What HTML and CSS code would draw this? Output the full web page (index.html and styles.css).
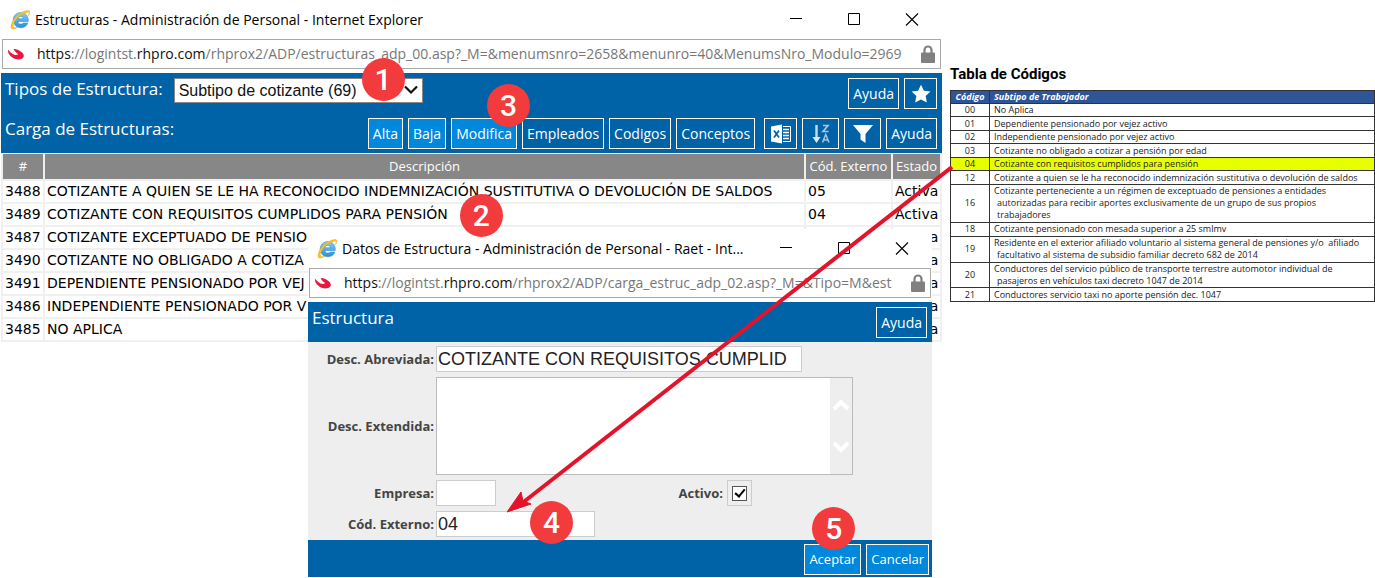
FILE: index.html
```html
<!DOCTYPE html>
<html lang="es">
<head>
<meta charset="utf-8">
<title>Estructuras - Administración de Personal</title>
<link rel="stylesheet" href="styles.css">
</head>
<body>
<svg class="defs" aria-hidden="true">
  <defs>
    <linearGradient id="ie-blue" x1="0" y1="0" x2="0" y2="1"><stop offset="0" stop-color="#7fd0f5"/><stop offset="1" stop-color="#2a8fd6"/></linearGradient>
    <symbol id="ie" viewBox="0 0 20 20">
      <path d="M10.600 2.600c-4.300 0-7.400 3.200-7.400 7.500s3.200 7.700 7.600 7.700c3.400 0 6-1.800 7.100-4.800h-4.600c-.5.700-1.300 1.100-2.400 1.100-1.700 0-2.800-1-2.900-2.600h10.300c.5-5.200-2.900-8.900-7.700-8.900zM8 8.700c.2-1.400 1.200-2.300 2.700-2.300s2.500.9 2.600 2.300z" fill="url(#ie-blue)" stroke="#2b87c8" stroke-width=".5"/>
      <path d="M15.200 3.600C17 2.200 18.600 1.700 19 2.500c.3.700 0 1.900-.6 3.200.9-1.800 1.900-3.900.8-4.900C17-.6 8.500 3 3.900 9.200.8 13.700.2 18 2 18.900c1.400.6 3.800-.3 6-1.700-2 .6-3.600.7-4.300-.1-1.200-1.300.2-5.200 3.400-8.900 2.500-2.800 5.600-4.300 8.100-4.600z" fill="#f7c331" stroke="#e0a51a" stroke-width=".4"/>
    </symbol>
    <symbol id="leaf" viewBox="0 0 18 12">
      <path d="M1 1.800C.4 4 2 7.100 5 9.300c3 2.200 6.800 2.700 9.300 1.700 2.600-1 3.200-3.100 1.800-5.200C14.400 3.300 10.500 1 6.800 1c.6 2.100 2.100 3.800 4.400 5.100-.9 1-2.300 1.200-3.800.7C5 6 2.800 4 1 1.800z" fill="#e8173f"/>
    </symbol>
    <symbol id="lock" viewBox="0 0 14 18">
      <path d="M3.500 9V5a3.500 3.500 0 0 1 7 0v4" fill="none" stroke="#808080" stroke-width="2.200"/>
      <rect y="7.500" width="14" height="10.500" rx="1" fill="#808080"/>
    </symbol>
    <symbol id="min" viewBox="0 0 14 14"><path d="M1 5.500h12" stroke="#000"/></symbol>
    <symbol id="max" viewBox="0 0 14 14"><path d="M1.500 .5h11v11h-11z" fill="none" stroke="#000"/></symbol>
    <symbol id="close" viewBox="0 0 14 14"><path d="M1 .5l12 12M13 .5L1 12.500" stroke="#000" stroke-width="1.100"/></symbol>
  </defs>
</svg>
<main class="desktop">
  <section class="window">
    <header class="titlebar">
      <svg class="ie"><use href="#ie"/></svg>
      <h1 class="caption">Estructuras - Administración de Personal - Internet Explorer</h1>
      <button class="sys" aria-label="Minimizar"><svg><use href="#min"/></svg></button>
      <button class="sys" aria-label="Maximizar"><svg><use href="#max"/></svg></button>
      <button class="sys" aria-label="Cerrar"><svg><use href="#close"/></svg></button>
    </header>
    <div class="address">
      <svg class="leaf"><use href="#leaf"/></svg>
      <span class="url"><b>https</b>://logintst.<b>rhpro.com</b>/rhprox2/ADP/estructuras_adp_00.asp?_M=&amp;menumsnro=2658&amp;menunro=40&amp;MenumsNro_Modulo=2969</span>
      <svg class="lock"><use href="#lock"/></svg>
    </div>
    <div class="toolbar">
      <div class="bar">
        <label class="heading" for="tipo">Tipos de Estructura:</label>
        <span class="picker">
          <select id="tipo"><option>Subtipo de cotizante (69)</option></select>
          <svg class="arrow-down" viewBox="0 0 14 10"><path d="M1 1.500l6 6 6-6" fill="none" stroke="#111" stroke-width="2.200"/></svg>
          <span class="badge badge-type">1</span>
        </span>
        <span class="actions">
          <button class="btn">Ayuda</button>
          <button class="btn icon star" aria-label="Favorito"><svg viewBox="0 0 20 20"><path d="M10 .8l2.900 5.900 6.500.9-4.700 4.500 1.100 6.500-5.800-3-5.800 3 1.100-6.500L.6 7.600l6.500-.9z" fill="#fff"/></svg></button>
        </span>
      </div>
      <div class="bar">
        <span class="heading">Carga de Estructuras:</span>
        <span class="actions">
          <button class="btn bright">Alta</button>
          <button class="btn bright">Baja</button>
          <span class="marked"><button class="btn bright">Modifica</button><span class="badge badge-edit">3</span></span>
          <button class="btn">Empleados</button>
          <button class="btn">Codigos</button>
          <button class="btn">Conceptos</button>
          <button class="btn icon excel" aria-label="Excel"><svg viewBox="0 0 20 20"><path d="M0 2.500L11 .5v19L0 17.500z" fill="#fff"/><path d="M3 6.500l5 7M8 6.500l-5 7" stroke="#0063a8" stroke-width="1.700"/><path d="M12 2.500h7.500v15H12" fill="none" stroke="#fff"/><path d="M12 5.500h6M12 8.500h6M12 11.500h6M12 14.500h6" stroke="#fff" stroke-width="1.500"/></svg></button>
          <button class="btn icon" aria-label="Ordenar"><svg viewBox="0 0 20 20"><path d="M5.500 1v13" stroke="#c9dbe9" stroke-width="2.400"/><path d="M1.500 13h8l-4 6z" fill="#dce8f1"/><path d="M12 1.500h5l-5 6h5.500" fill="none" stroke="#a9c5da" stroke-width="1.700"/><path d="M11.500 18.500l3.200-8 3.300 8M12.700 16h4" fill="none" stroke="#a9c5da" stroke-width="1.500"/></svg></button>
          <button class="btn icon" aria-label="Filtrar"><svg viewBox="0 0 20 20"><path d="M0 1h20l-7.500 9v9l-5-3.500V10z" fill="#fff"/></svg></button>
          <button class="btn">Ayuda</button>
        </span>
      </div>
    </div>
    <table class="grid">
      <colgroup><col class="c-id"><col><col class="c-code"><col class="c-state"></colgroup>
      <thead><tr><th>#</th><th>Descripción</th><th>Cód. Externo</th><th>Estado</th></tr></thead>
      <tbody>
        <tr><td>3488</td><td>COTIZANTE A QUIEN SE LE HA RECONOCIDO INDEMNIZACIÓN SUSTITUTIVA O DEVOLUCIÓN DE SALDOS</td><td>05</td><td>Activa</td></tr>
        <tr><td>3489</td><td><span class="marked">COTIZANTE CON REQUISITOS CUMPLIDOS PARA PENSIÓN<span class="badge badge-row">2</span></span></td><td>04</td><td>Activa</td></tr>
        <tr><td>3487</td><td>COTIZANTE EXCEPTUADO DE PENSIO</td><td></td><td>Activa</td></tr>
        <tr><td>3490</td><td>COTIZANTE NO OBLIGADO A COTIZA</td><td></td><td>Activa</td></tr>
        <tr><td>3491</td><td>DEPENDIENTE PENSIONADO POR VEJ</td><td></td><td>Activa</td></tr>
        <tr><td>3486</td><td>INDEPENDIENTE PENSIONADO POR V</td><td></td><td>Activa</td></tr>
        <tr><td>3485</td><td>NO APLICA</td><td></td><td>Activa</td></tr>
      </tbody>
    </table>
  </section>

  <aside class="codes">
    <h2>Tabla de Códigos</h2>
    <table>
      <thead><tr><th>Código</th><th>Subtipo de Trabajador</th></tr></thead>
      <tbody>
        <tr><td>00</td><td>No Aplica</td></tr>
        <tr><td>01</td><td>Dependiente pensionado por vejez activo</td></tr>
        <tr><td>02</td><td>Independiente pensionado por vejez activo</td></tr>
        <tr><td>03</td><td>Cotizante no obligado a cotizar a pensión por edad</td></tr>
        <tr class="hit"><td>04</td><td>Cotizante con requisitos cumplidos para pensión</td></tr>
        <tr><td>12</td><td>Cotizante a quien se le ha reconocido indemnización sustitutiva o devolución de saldos</td></tr>
        <tr class="multi"><td>16</td><td>Cotizante perteneciente a un régimen de exceptuado de pensiones a entidades<br>autorizadas para recibir aportes exclusivamente de un grupo de sus propios<br>trabajadores</td></tr>
        <tr><td>18</td><td>Cotizante pensionado con mesada superior a 25 smlmv</td></tr>
        <tr class="multi"><td>19</td><td>Residente en el exterior afiliado voluntario al sistema general de pensiones y/o&nbsp; afiliado<br>facultativo al sistema de subsidio familiar decreto 682 de 2014</td></tr>
        <tr class="multi"><td>20</td><td>Conductores del servicio público de transporte terrestre automotor individual de<br>pasajeros en vehículos taxi decreto 1047 de 2014</td></tr>
        <tr><td>21</td><td>Conductores servicio taxi no aporte pensión dec. 1047</td></tr>
      </tbody>
    </table>
  </aside>

  <section class="dialog" role="dialog" aria-labelledby="dialog-caption">
    <header class="titlebar">
      <svg class="ie"><use href="#ie"/></svg>
      <h2 class="caption" id="dialog-caption">Datos de Estructura - Administración de Personal - Raet - Int...</h2>
      <button class="sys" aria-label="Minimizar"><svg><use href="#min"/></svg></button>
      <button class="sys" aria-label="Maximizar"><svg><use href="#max"/></svg></button>
      <button class="sys" aria-label="Cerrar"><svg><use href="#close"/></svg></button>
    </header>
    <div class="address">
      <svg class="leaf"><use href="#leaf"/></svg>
      <span class="url"><b>https</b>://logintst.<b>rhpro.com</b>/rhprox2/ADP/carga_estruc_adp_02.asp?_M=&amp;Tipo=M&amp;est</span>
      <svg class="lock"><use href="#lock"/></svg>
    </div>
    <div class="bar dialog-head"><span class="heading">Estructura</span><span class="actions"><button class="btn">Ayuda</button></span></div>
    <form class="form">
      <label for="abrev">Desc. Abreviada:</label>
      <input class="field wide" id="abrev" value="COTIZANTE CON REQUISITOS CUMPLID">
      <label for="ext">Desc. Extendida:</label>
      <div class="memo">
        <textarea id="ext"></textarea>
        <span class="scroll">
          <svg viewBox="0 0 16 12"><path d="M1 10l7-7 7 7" fill="none" stroke="#fff" stroke-width="4"/></svg>
          <svg viewBox="0 0 16 12"><path d="M1 2l7 7 7-7" fill="none" stroke="#fff" stroke-width="4"/></svg>
        </span>
      </div>
      <label for="empresa">Empresa:</label>
      <div class="line">
        <input class="field small" id="empresa">
        <label for="activo">Activo:</label>
        <span class="tick"><input type="checkbox" id="activo" checked></span>
      </div>
      <label for="cod">Cód. Externo:</label>
      <div class="line"><span class="marked"><input class="field medium" id="cod" value="04"><span class="badge badge-code">4</span></span></div>
    </form>
    <footer class="foot">
      <span class="marked"><button class="btn bright">Aceptar</button><span class="badge badge-ok">5</span></span>
      <button class="btn bright">Cancelar</button>
    </footer>
  </section>

  <svg class="pointer" viewBox="0 0 446 350" aria-hidden="true">
    <path d="M445 1L14 338" stroke="#e2132b" stroke-width="4"/>
    <path d="M0 346l14-20 2 9 8 3z" fill="#e2132b" stroke="#e2132b"/>
  </svg>
</main>
</body>
</html>
```
FILE: styles.css
```css
* { box-sizing: border-box; }
body {
  margin: 0;
  background: #fff;
  color: #000;
  font-family: "Open Sans", "Noto Sans", sans-serif;
}
h1, h2 { margin: 0; font-weight: 400; }
button, input, select, textarea { font: inherit; margin: 0; }
.defs { position: absolute; width: 0; height: 0; }

.desktop {
  position: relative;
  display: flex;
  align-items: flex-start;
  gap: 8px;
  min-height: 100vh;
  padding-left: 1px;
  overflow: hidden;
}
.window { flex: 941 1 0; min-width: 0; }

/* Window chrome */
.titlebar { display: flex; align-items: center; height: 39px; padding: 0 16px 0 9px; }
.ie { width: 20px; height: 20px; margin-right: 5px; }
.caption { flex: 1; font-size: 14px; line-height: 20px; white-space: nowrap; }
.sys { display: flex; width: 58px; padding: 0; justify-content: center; border: 0; background: none; }
.sys:last-child { margin-right: -15px; }
.sys svg { width: 14px; height: 14px; }
.address {
  display: flex;
  align-items: center;
  height: 30px;
  margin: 0 1px;
  padding: 0 5px 0 4px;
  border: 1px solid #aaa;
}
.leaf { flex: none; width: 18px; height: 12px; margin-right: 12px; }
.url { flex: 1; min-width: 0; overflow: hidden; white-space: nowrap; font-size: 14px; line-height: 24px; color: #777; }
.url b { font-weight: 400; color: #111; }
.lock { flex: none; width: 14px; height: 18px; margin-left: 9px; }

/* Blue bars */
.toolbar { margin-top: 4px; padding-bottom: 4px; background: #0063a8; }
.bar { display: flex; align-items: flex-start; height: 40px; padding: 5px 5px 5px 4px; background: #0063a8; color: #fff; }
.toolbar .bar:last-child { height: 36px; }
.heading { font-size: 17px; line-height: 22px; white-space: nowrap; }
.actions { display: flex; gap: 5px; margin-left: auto; }
.btn {
  height: 31px;
  padding: 0 4px;
  border: 1px solid #fff;
  background: #0063a8;
  color: #fff;
  font-size: 14px;
  line-height: 29px;
  white-space: nowrap;
}
.bright { background: #0088dc; }
.icon { display: flex; align-items: center; justify-content: center; width: 37px; padding: 0; }
.icon svg { width: 20px; height: 20px; }
.star, .excel { width: 33px; }
.excel { margin-left: 4px; }
.picker { position: relative; width: 249px; margin-left: 11px; }
.picker select {
  display: block;
  width: 100%;
  height: 25px;
  padding: 0 4px;
  appearance: none;
  border: 1px solid #888;
  border-radius: 0;
  background: #fff;
  color: #111;
  font: 16px/23px "Liberation Sans", Arial, sans-serif;
}
.arrow-down { position: absolute; right: 5px; top: 7px; width: 14px; height: 10px; pointer-events: none; }

/* Numbered markers */
.marked { position: relative; display: inline-block; }
.badge {
  position: absolute;
  z-index: 3;
  width: 43px;
  height: 43px;
  border-radius: 50%;
  background: #f23b3d;
  color: #fff;
  text-align: center;
  font: 500 30px/43px Roboto, sans-serif;
}
.badge-type { right: 18px; top: -20px; }
.badge-edit { right: -13px; top: -34px; }
.badge-row { left: 100%; top: -10px; margin-left: 12px; }
.badge-code { right: 22px; top: -10px; }
.badge-ok { left: 8px; top: -37px; }

/* Structure list */
.grid { width: 100%; table-layout: fixed; border-collapse: collapse; font: 14px/21px "DejaVu Sans", Verdana, sans-serif; }
.c-id { width: 42px; }
.c-code { width: 87px; }
.c-state { width: 49px; }
.grid th { height: 26px; padding: 0; border: 2px solid #eee; border-width: 1px 2px; background: #878787; color: #fff; font: 13px/20px "Open Sans", sans-serif; }
.grid td { height: 23px; padding: 0 2px; border: 2px solid #f0f0f0; white-space: nowrap; overflow: visible; }

/* Code reference */
.codes { flex: 425 1 0; min-width: 0; padding-top: 64px; }
.codes h2 { font: 700 15px/20px Roboto, sans-serif; margin-bottom: 6px; }
.codes table { width: 100%; height: 212px; border-collapse: collapse; table-layout: fixed; font: 9px/12px "Open Sans", sans-serif; color: #222; }
.codes th, .codes td { height: 13px; padding: 0 4px; border: 1px solid #333; text-align: left; white-space: nowrap; }
.codes th { background: #2d5597; color: #fff; font-style: italic; }
.codes th:first-child, .codes td:first-child { width: 39px; padding: 0; text-align: center; }
.codes .multi td:last-child { padding-left: 7px; text-indent: -3px; }
.hit { background: #e8ff00; }

/* Dialog window */
.dialog { position: absolute; z-index: 2; left: 308px; top: 229px; width: 624px; background: #fff; }
.dialog .address { margin-right: 1px; }
.dialog-head { margin-top: 4px; }
.form {
  display: grid;
  grid-template-columns: 126px 1fr;
  column-gap: 2px;
  row-gap: 5px;
  align-items: center;
  padding: 4px 0 3px;
  background: #eee;
}
.form label { color: #444; font: 700 13px/20px "Open Sans", sans-serif; text-align: right; white-space: nowrap; }
.field { display: block; height: 26px; padding: 0 1px; border: 1px solid #ccc; background: #fff; color: #222; font: 18px/22px "Liberation Sans", Arial, sans-serif; }
.wide { width: 366px; }
.medium { width: 159px; }
.small { width: 60px; }
.memo { display: flex; width: 417px; height: 98px; border: 1px solid #bbb; }
.memo textarea { flex: 1; border: 0; resize: none; background: #fff; }
.scroll { display: flex; flex-direction: column; justify-content: space-between; align-items: center; width: 22px; padding: 20px 0; background: #eee; }
.scroll svg { width: 16px; height: 14px; }
.line { display: flex; align-items: center; min-height: 26px; }
.line label { width: 227px; margin-right: 4px; }
.tick { display: grid; place-items: center; width: 25px; height: 26px; border: 1px solid #ccc; }
.tick input { width: 15px; height: 15px; appearance: none; border: 1px solid #555; background: #fff; display: grid; place-items: center; }
.tick input:checked::after { content: ""; width: 4px; height: 8px; margin-bottom: 2px; border: solid #000; border-width: 0 2px 2px 0; transform: rotate(40deg); }
.foot { display: flex; justify-content: flex-end; gap: 5px; height: 37px; padding: 4px 3px 2px; background: #0063a8; }
.foot .btn { font-size: 13px; }

.pointer { position: absolute; z-index: 2; left: 507px; top: 166px; width: 446px; height: 350px; }
```
